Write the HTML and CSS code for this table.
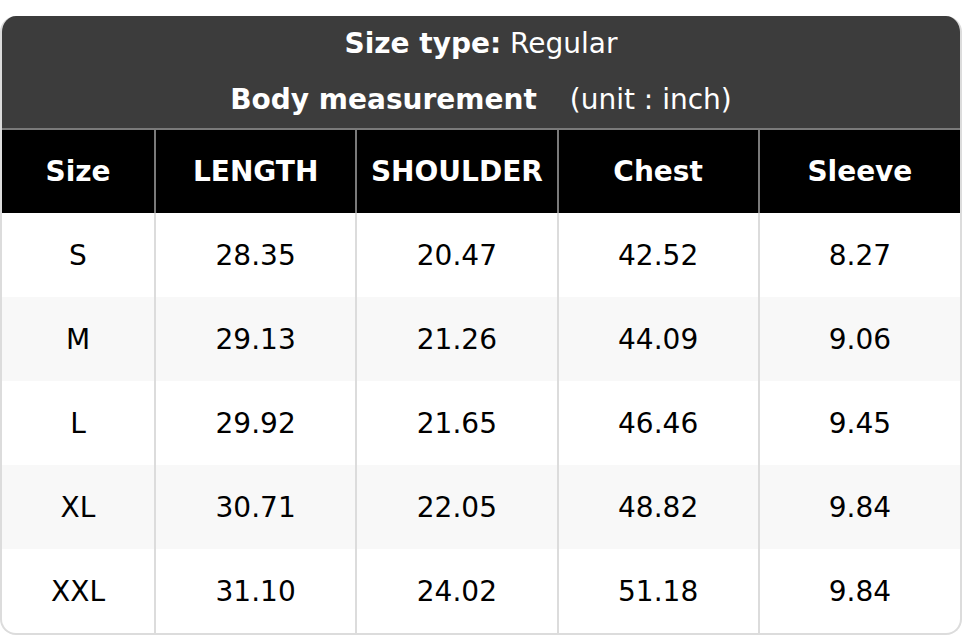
FILE: index.html
```html
<!DOCTYPE html>
<html>
<head>
<meta charset="utf-8">
<link rel="stylesheet" href="styles.css">
</head>
<body>
<div class="chart">
  <div class="title">
    <div class="title-line"><b>Size type:</b> Regular</div>
    <div class="title-line"><b>Body measurement</b><span class="unit">(unit : inch)</span></div>
  </div>
  <table class="sizes">
    <colgroup>
      <col class="c-size"><col class="c-val"><col class="c-val"><col class="c-val"><col class="c-val">
    </colgroup>
    <thead>
      <tr><th>Size</th><th>LENGTH</th><th>SHOULDER</th><th>Chest</th><th>Sleeve</th></tr>
    </thead>
    <tbody>
      <tr><td>S</td><td>28.35</td><td>20.47</td><td>42.52</td><td>8.27</td></tr>
      <tr><td>M</td><td>29.13</td><td>21.26</td><td>44.09</td><td>9.06</td></tr>
      <tr><td>L</td><td>29.92</td><td>21.65</td><td>46.46</td><td>9.45</td></tr>
      <tr><td>XL</td><td>30.71</td><td>22.05</td><td>48.82</td><td>9.84</td></tr>
      <tr><td>XXL</td><td>31.10</td><td>24.02</td><td>51.18</td><td>9.84</td></tr>
    </tbody>
  </table>
</div>
</body>
</html>
```
FILE: styles.css
```css
html, body {
  margin: 0;
  padding: 0;
  background: #ffffff;
}
body {
  font-family: "DejaVu Sans", sans-serif;
  color: #000;
}
.chart {
  margin-top: 16px;
  width: 962px;
  box-sizing: border-box;
  border: 2px solid #dcdcdc;
  border-top: none;
  border-radius: 16px;
  overflow: hidden;
}
.title {
  background: #3c3c3c;
  color: #fff;
  text-align: center;
  font-size: 28px;
  border-bottom: 2px solid #7a7a7a;
}
.title-line {
  height: 56px;
  line-height: 56px;
}
.unit {
  margin-left: 33px;
}
.sizes {
  width: 100%;
  border-collapse: collapse;
  table-layout: fixed;
  font-size: 28px;
  text-align: center;
}
.c-size { width: 153px; }
.sizes th {
  background: #000;
  color: #fff;
  font-weight: bold;
  height: 83px;
  padding: 0;
  border-left: 2px solid #7a7a7a;
}
.sizes th:first-child { border-left: none; }
.sizes td {
  height: 84px;
  padding: 0;
  border-left: 2px solid #dcdcdc;
}
.sizes td:first-child { border-left: none; }
.sizes tbody tr:nth-child(even) td { background: #f8f8f8; }
```
